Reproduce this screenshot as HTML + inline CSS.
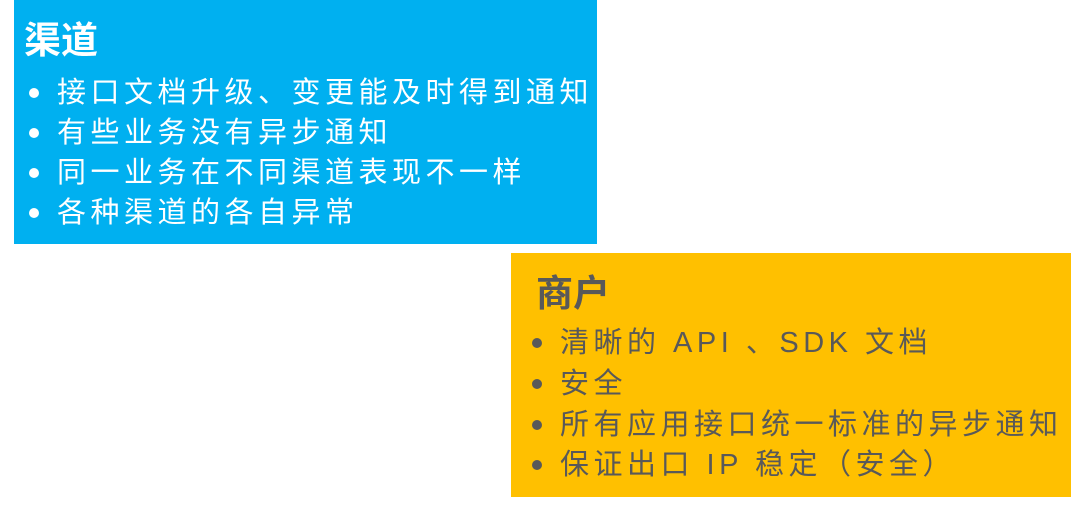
<html><head><style>
body{margin:0;width:1080px;height:507px;background:#fff;position:relative;overflow:hidden;font-family:"Liberation Sans","Noto Sans CJK SC",sans-serif}
.box{position:absolute}
.b{left:14px;top:0;width:583px;height:244px;background:#00B0F0;color:#fff}
.y{left:511px;top:253px;width:560px;height:244px;background:#FFC000;color:#595959}
.t{position:absolute;font-size:37px;font-weight:bold;line-height:42px}
.l{position:absolute;font-size:29px;line-height:40px;letter-spacing:4.5px;white-space:nowrap}
.l:before{content:"";position:absolute;left:-28px;top:15px;width:10px;height:10px;border-radius:50%;background:currentColor}
</style></head><body>
<div class="box b">
<div class="t" style="left:10px;top:20px">渠道</div>
<div class="l" style="left:43px;top:73px">接口文档升级、变更能及时得到通知</div>
<div class="l" style="left:43px;top:113px">有些业务没有异步通知</div>
<div class="l" style="left:43px;top:153px">同一业务在不同渠道表现不一样</div>
<div class="l" style="left:43px;top:193px">各种渠道的各自异常</div>
</div>
<div class="box y">
<div class="t" style="left:25px;top:20px">商户</div>
<div class="l" style="left:49px;top:70px">清晰的 API 、SDK 文档</div>
<div class="l" style="left:49px;top:111px">安全</div>
<div class="l" style="left:49px;top:152px">所有应用接口统一标准的异步通知</div>
<div class="l" style="left:49px;top:192px">保证出口 IP 稳定（安全）</div>
</div>
</body></html>
